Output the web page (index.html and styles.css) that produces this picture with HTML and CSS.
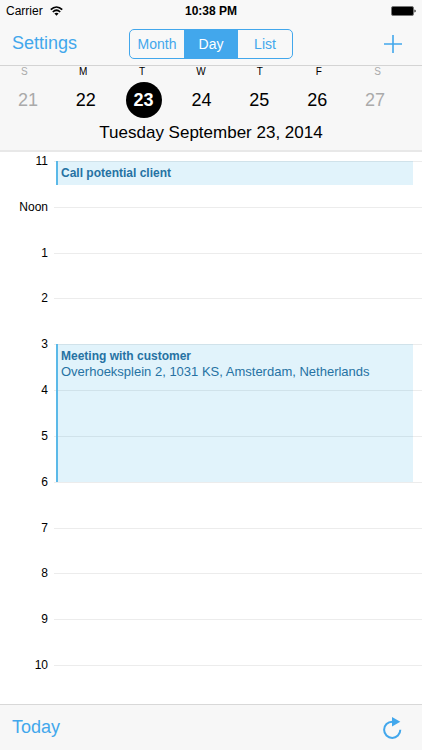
FILE: index.html
```html
<!DOCTYPE html>
<html lang="en">
  <head>
    <meta charset="UTF-8" />
    <meta name="viewport" content="width=device-width, initial-scale=1.0" />
    <title>Calendar</title>
    <link rel="stylesheet" href="styles.css">
  </head>
  <body>
    <div class="status-bar">
      <div class="carrier">
        <span>Carrier</span>
        <svg class="wifi" viewBox="0 0 13 10" width="13" height="10">
          <path d="M0.8 3.6C4.2 0.2 8.8 0.2 12.2 3.6M2.8 6C5 3.9 8 3.9 10.2 6" fill="none" stroke="#000" stroke-width="1.7" />
          <path d="M4.4 7.5C5.6 6.4 7.4 6.4 8.6 7.5L6.5 9.7Z" />
        </svg>
      </div>
      <div class="time">10:38 PM</div>
      <div class="battery">
        <svg viewBox="0 0 25 10" width="25" height="10">
          <rect x="0.5" y="0.5" width="22" height="9" rx="1.5" stroke="#777" />
          <path d="M23.5 3.5C25 4 25 6 23.5 6.5Z" />
        </svg>
      </div>
    </div>

    <div class="nav-bar">
      <div class="nav-left"><button class="text-button">Settings</button></div>
      <div class="segments">
        <button>Month</button>
        <button class="active">Day</button>
        <button>List</button>
      </div>
      <div class="nav-right">
        <button class="icon-button" aria-label="Add event">
          <svg viewBox="0 0 18 18" width="18" height="18">
            <path d="M9 0V18M0 9H18" stroke="#42a7ec" stroke-width="1.6" />
          </svg>
        </button>
      </div>
    </div>

    <div class="week">
      <div class="week-letters">
        <span class="weekend">S</span>
        <span>M</span>
        <span>T</span>
        <span>W</span>
        <span>T</span>
        <span>F</span>
        <span class="weekend">S</span>
      </div>
      <div class="week-days">
        <button class="weekend">21</button>
        <button>22</button>
        <button class="selected">23</button>
        <button>24</button>
        <button>25</button>
        <button>26</button>
        <button class="weekend">27</button>
      </div>
      <h1>Tuesday September 23, 2014</h1>
    </div>

    <div class="timeline">
      <div class="hours">
        <div class="hour"><span>11</span></div>
        <div class="hour"><span>Noon</span></div>
        <div class="hour"><span>1</span></div>
        <div class="hour"><span>2</span></div>
        <div class="hour"><span>3</span></div>
        <div class="hour"><span>4</span></div>
        <div class="hour"><span>5</span></div>
        <div class="hour"><span>6</span></div>
        <div class="hour"><span>7</span></div>
        <div class="hour"><span>8</span></div>
        <div class="hour"><span>9</span></div>
        <div class="hour"><span>10</span></div>
        <div class="event call">
          <strong>Call potential client</strong>
        </div>
        <div class="event meeting">
          <strong>Meeting with customer</strong>
          <span>Overhoeksplein 2, 1031 KS, Amsterdam, Netherlands</span>
        </div>
      </div>
    </div>

    <div class="toolbar">
      <button class="text-button">Today</button>
      <button class="icon-button" aria-label="Refresh">
        <svg viewBox="0 0 19 22" width="19" height="22">
          <path d="M17.3 12.8A8.1 8.1 0 1 1 9.2 4.7H11" fill="none" stroke="#42a7ec" stroke-width="2" />
          <path d="M9 0L17.3 4.7L9 9.6Z" fill="#42a7ec" />
        </svg>
      </button>
    </div>
  </body>
</html>
```
FILE: styles.css
```css
* {
  box-sizing: border-box;
}

body {
  margin: 0;
  height: 100vh;
  display: flex;
  flex-direction: column;
  font-family: "Liberation Sans", Arial, sans-serif;
  font-size: 12px;
  color: #000;
  background-color: #fff;
}

button {
  padding: 0;
  border: none;
  background: none;
  font-family: inherit;
  color: inherit;
  cursor: pointer;
}

svg {
  display: block;
}

/* Status bar */
.status-bar {
  display: flex;
  align-items: center;
  height: 22px;
  padding: 0 6px;
  background-color: #f8f8f8;
}

.carrier,
.battery {
  flex: 1;
  display: flex;
  align-items: center;
  gap: 7px;
}

.battery {
  justify-content: flex-end;
}

.time {
  font-weight: bold;
}

/* Navigation */
.nav-bar {
  display: flex;
  align-items: center;
  height: 44px;
  padding: 0 20px 0 12px;
  background-color: #f8f8f8;
  border-bottom: 1px solid #d4d4d4;
}

.nav-left {
  flex: 1;
  margin-right: 8px;
}

.nav-right {
  flex: 1;
  display: flex;
  justify-content: flex-end;
}

.text-button {
  font-size: 18px;
  color: #42a7ec;
}

.segments {
  display: flex;
  width: 164px;
  height: 30px;
  border: 1px solid #42a7ec;
  border-radius: 5px;
  overflow: hidden;
}

.segments button {
  flex: 1;
  font-size: 14px;
  color: #42a7ec;
}

.segments .active {
  color: #fff;
  background-color: #42a7ec;
}

/* Week strip */
.week {
  height: 86px;
  background-color: #f7f7f7;
  border-bottom: 2px solid #e8e8e8;
}

.week-letters,
.week-days {
  display: grid;
  grid-template-columns: repeat(7, 1fr);
  justify-items: center;
}

.week-letters {
  margin: 0 15px 0 -5px;
  padding-bottom: 4px;
  font-size: 10px;
  line-height: 12px;
}

.week-days {
  margin: 0 18px 0 -1px;
}

.week-days button {
  width: 36px;
  height: 36px;
  font-size: 18px;
}

.week .weekend {
  color: #aaa;
}

.week-days .selected {
  border-radius: 50%;
  font-weight: bold;
  color: #fff;
  background-color: #000;
}

.week h1 {
  margin: 4px 0 0;
  font-size: 17px;
  font-weight: normal;
  line-height: 22px;
  text-align: center;
}

/* Day timeline */
.timeline {
  flex: 1;
  display: flex;
  padding-top: 9px;
  overflow: hidden;
}

.hours {
  flex: 1;
  display: grid;
  grid-template-columns: 54px 1fr;
  grid-template-rows: repeat(11, 1fr) 39px;
}

.hour {
  grid-column: 1 / 3;
  display: grid;
  grid-template-columns: 48px 1fr;
  column-gap: 6px;
}

.hour span {
  margin-top: -7px;
  line-height: 14px;
  text-align: right;
}

.hour::after {
  content: "";
  border-top: 1px solid #ececec;
}

.event {
  grid-column: 2;
  margin: 0 9px 0 2px;
  padding: 5px 3px;
  border-left: 2px solid #5bb9e8;
  font-size: 13px;
  line-height: 15px;
  color: #2672a3;
  background-color: rgba(27, 161, 226, 0.13);
}

.event strong,
.event span {
  display: block;
}

.event strong {
  font-size: 12px;
}

.call {
  grid-row: 1;
  height: 24px;
}

.meeting {
  grid-row: 5 / 8;
}

.hour:nth-child(1) { grid-row: 1; }
.hour:nth-child(2) { grid-row: 2; }
.hour:nth-child(3) { grid-row: 3; }
.hour:nth-child(4) { grid-row: 4; }
.hour:nth-child(5) { grid-row: 5; }
.hour:nth-child(6) { grid-row: 6; }
.hour:nth-child(7) { grid-row: 7; }
.hour:nth-child(8) { grid-row: 8; }
.hour:nth-child(9) { grid-row: 9; }
.hour:nth-child(10) { grid-row: 10; }
.hour:nth-child(11) { grid-row: 11; }
.hour:nth-child(12) { grid-row: 12; }

/* Bottom toolbar */
.toolbar {
  display: flex;
  align-items: center;
  justify-content: space-between;
  height: 46px;
  padding: 0 20px 0 12px;
  background-color: #f7f7f7;
  border-top: 1px solid #d8d8d8;
}
```
